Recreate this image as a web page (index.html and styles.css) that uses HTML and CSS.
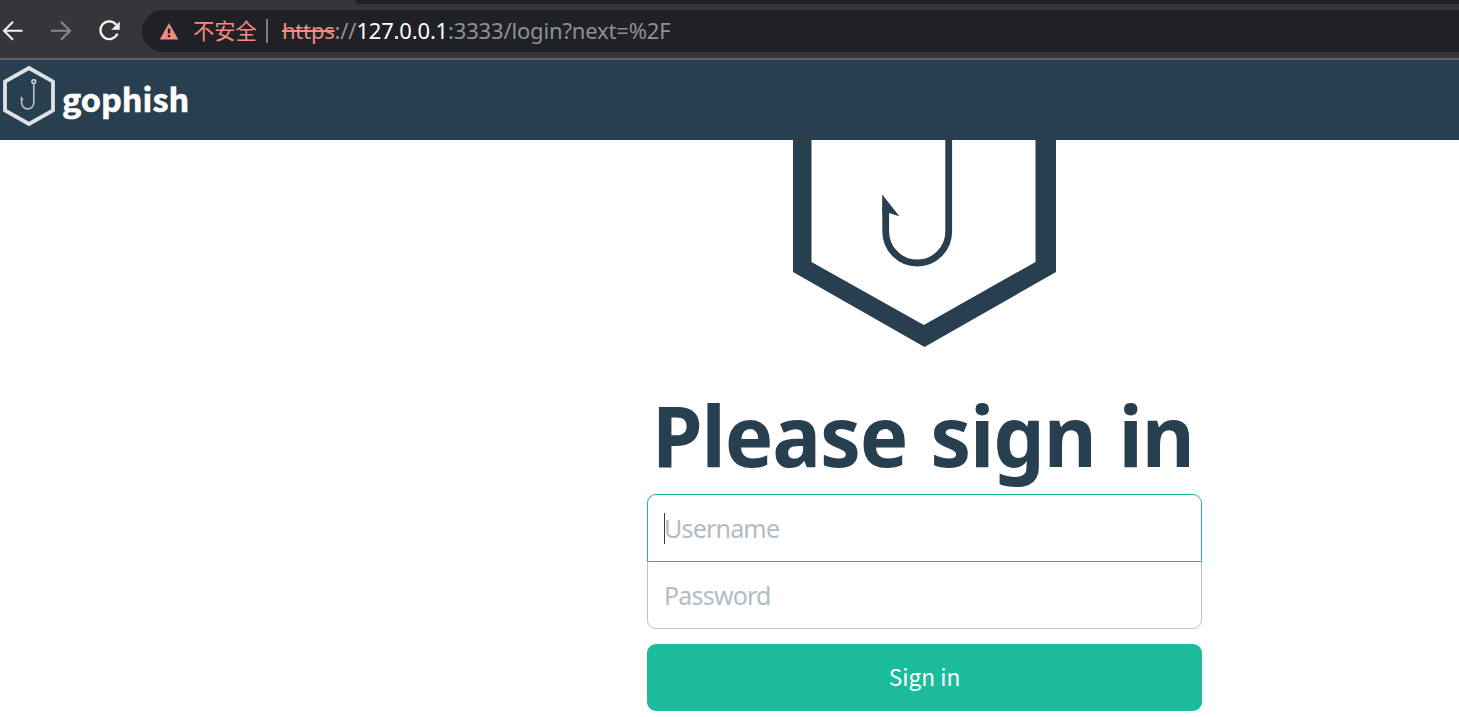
FILE: index.html
```html
<!DOCTYPE html>
<html lang="en">
  <head>
    <meta charset="UTF-8" />
    <meta name="viewport" content="width=device-width, initial-scale=1.0" />
    <title>Gophish - Login</title>
    <link rel="stylesheet" href="styles.css">
  </head>
  <body>
    <div class="browser">
      <div class="tab-strip"></div>
      <div class="toolbar">
        <svg class="nav-icon" width="142" height="42" viewBox="0 10 142 42" fill="none" stroke-width="2.1">
          <path d="M22.5 30.7H4.5M13 21.7l-9 9 9 9" stroke="#f1f3f4" />
          <path d="M51 30.7h18.5M61 21.7l9 9-9 9" stroke="#86888a" />
          <path d="M116.2 24.8A8.8 8.8 0 1 0 117.4 33.6" stroke="#f1f3f4" stroke-width="2.3" />
          <path d="M119.7 21.4v8.4h-8.4z" fill="#f1f3f4" />
        </svg>
        <div class="address">
          <svg class="warning" width="20" height="18" viewBox="0 0 20 18">
            <path d="M10 1L19.3 17.4H.7z" fill="#f28b82" />
            <path d="M8.8 6.5h2.4v5H8.8zM8.8 13h2.4v2.3H8.8z" fill="#202124" />
          </svg>
          <span class="insecure">不安全</span>
          <span class="divider"></span>
          <span class="url"><span class="scheme">https</span><span class="slashes">://</span><span class="host">127.0.0.1</span><span class="path">:3333/login?next=%2F</span></span>
        </div>
      </div>
    </div>

    <div class="navbar">
      <svg class="navbar-logo" width="54" height="62" viewBox="0 0 54 62" fill="none" stroke="#dfe2e4">
        <path d="M27 3L51 16.6V45.4L27 59 3 45.4V16.6z" stroke-width="3.8" />
        <circle cx="31.8" cy="16.6" r="1.9" stroke-width="1.4" />
        <path d="M31.8 18.5v19.3a6.1 6.1 0 0 1-12.2 0V33" stroke-width="1.7" stroke="#b5bfc6" />
        <path d="M18.8 31v5l2.8-1.8z" fill="#b5bfc6" stroke="none" />
      </svg>
      <span class="navbar-brand">gophish</span>
    </div>

    <div class="container">
      <form class="form-signin">
        <svg class="logo" width="263" height="207" viewBox="793 140 263 207">
          <path fill="#283f50" fill-rule="evenodd" d="M793 120L924.5 45 1056 120V272L924.5 347 793 272zM811.5 131V262L923.8 325 1035.5 262V131L923.8 67z" />
          <path fill="none" stroke="#283f50" stroke-width="6.8" d="M948.7 100V231.5a31.5 31.5 0 0 1-63 0V206" />
          <path fill="#283f50" d="M882.2 194.5L899.4 216.3 889 213 882.2 214z" />
        </svg>
        <h2 class="form-heading"><span>Please sign in</span></h2>
        <div class="field username">
          <span class="caret"></span>
          <input type="text" class="form-control" placeholder="Username" />
        </div>
        <div class="field password">
          <input type="password" class="form-control" placeholder="Password" />
        </div>
        <button class="btn" type="submit">Sign in</button>
      </form>
    </div>
  </body>
</html>
```

FILE: styles.css
```css
* {
  box-sizing: border-box;
}
body {
  margin: 0;
  height: 717px;
  overflow: hidden;
  background: #fff;
  color: #283f50;
  font-family: "Noto Sans", "Noto Sans CJK SC", sans-serif;
}
.browser {
  height: 60px;
  background: #35363a;
  border-bottom: 2px solid #5f6368;
}
.tab-strip {
  height: 4px;
  margin-left: 355px;
  background: #202124;
  border-bottom-left-radius: 8px;
}
.toolbar {
  display: flex;
  padding-top: 6px;
}
.nav-icon {
  flex: none;
}
.address {
  display: flex;
  align-items: center;
  flex: 1;
  height: 42px;
  padding-left: 17px;
  background: #202124;
  border-radius: 21px 0 0 21px;
  color: #8e9194;
  font-size: 22px;
  line-height: 42px;
  white-space: nowrap;
}
.warning {
  flex: none;
}
.insecure {
  margin: 0 0 2px 14px;
  color: #f28b82;
  font-family: "Noto Sans CJK SC", sans-serif;
  font-size: 21.3px;
  font-weight: 400;
}
.divider {
  width: 2px;
  height: 24px;
  margin: 0 14px 0 9px;
  background: #7c7e81;
}
.url {
  display: flex;
  margin-bottom: 2px;
  letter-spacing: -0.17px;
}
.scheme {
  color: #f28b82;
  text-decoration: line-through;
}
.host {
  color: #fff;
}
.navbar {
  display: flex;
  height: 80px;
  padding: 5px 0 0 2px;
  background: #283f50;
}
.navbar-brand {
  margin: 8px 0 0 6px;
  color: #fff;
  font-family: "Noto Sans CJK SC", sans-serif;
  font-size: 32.4px;
  font-weight: 700;
  line-height: 50px;
  -webkit-text-stroke: 0.6px #fff;
}
.container {
  padding-left: 647px;
}
.form-signin {
  width: 555px;
}
.logo {
  display: block;
  margin: 0 auto;
}
.form-heading {
  height: 147px;
  margin: 0;
  padding: 29px 0 0 5px;
  font-family: "Noto Sans", sans-serif;
  font-size: 85px;
  font-weight: 700;
  line-height: 116px;
  white-space: nowrap;
}
/* slightly condensed lettering */
.form-heading span {
  display: inline-block;
  transform: scaleX(0.96);
  transform-origin: left;
  letter-spacing: -1.2px;
  word-spacing: 3px;
}
.field {
  position: relative;
  display: flex;
  height: 68px;
  border: 1px solid #bdc3c7;
}
.username {
  z-index: 1;
  border-color: #1abc9c;
  border-radius: 9px 9px 0 0;
}
.password {
  margin-top: -1px;
  border-radius: 0 0 9px 9px;
}
.caret {
  position: absolute;
  top: 18px;
  left: 16px;
  width: 1px;
  height: 31px;
  background: #283f50;
}
.form-control {
  width: 100%;
  padding: 0 16px 1px;
  border: 0;
  outline: 0;
  background: none;
  color: #283f50;
  font-family: "Noto Sans", sans-serif;
  font-size: 25px;
  letter-spacing: -0.8px;
}
.form-control::placeholder {
  color: #b2bcc5;
}
.btn {
  display: block;
  width: 100%;
  height: 67px;
  margin-top: 15px;
  padding: 0 0 3px;
  border: 0;
  border-radius: 9px;
  background: #1abc9c;
  color: #fff;
  font-family: "Noto Sans CJK SC", sans-serif;
  font-size: 22.7px;
}
```
